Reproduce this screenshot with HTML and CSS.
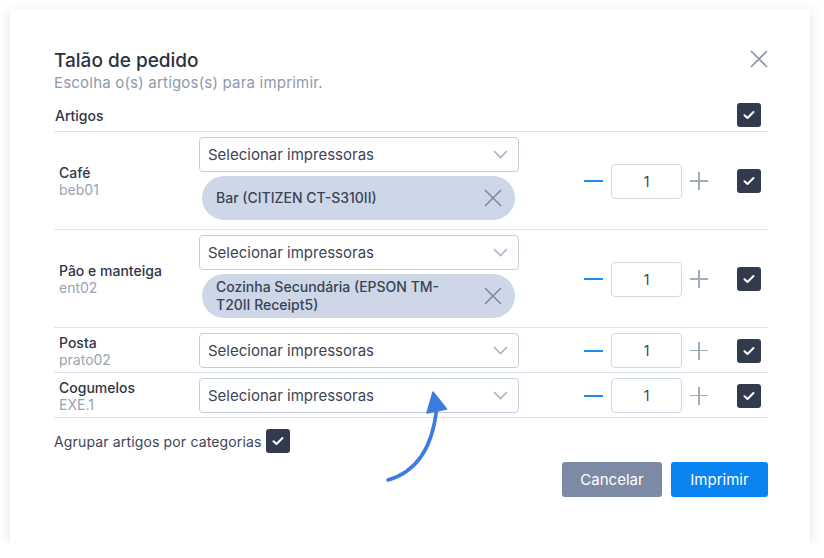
FILE: index.html
```html
<!DOCTYPE html>
<html lang="pt">
<head>
    <meta charset="UTF-8">
    <meta name="viewport" content="width=device-width, initial-scale=1.0">
    <title>Talão de pedido</title>
    <link rel="stylesheet" href="styles.css">
</head>
<body>
    <div class="dialog">
        <div class="dialog-header">
            <div>
                <h1 class="title">Talão de pedido</h1>
                <p class="subtitle">Escolha o(s) artigos(s) para imprimir.</p>
            </div>
            <button class="close" type="button" aria-label="Fechar">
                <svg width="18" height="18" viewBox="0 0 18 18"><path d="M1 1L17 17M17 1L1 17" stroke="#8794aa" stroke-width="1.6" fill="none"/></svg>
            </button>
        </div>

        <div class="list-head">
            <span class="list-label">Artigos</span>
            <span class="check"><svg width="12" height="10" viewBox="0 0 12 10"><path d="M1.5 5.2L4.5 8L10.5 2" stroke="#fff" stroke-width="2" fill="none" stroke-linecap="round" stroke-linejoin="round"/></svg></span>
        </div>

        <div class="item">
            <div class="item-name">
                <div class="name">Café</div>
                <div class="code">beb01</div>
            </div>
            <div class="printers">
                <div class="select">
                    <span>Selecionar impressoras</span>
                    <svg class="chevron" width="15" height="9" viewBox="0 0 15 9"><path d="M1 1L7.5 7.5L14 1" stroke="#a8b2c4" stroke-width="1.6" fill="none"/></svg>
                </div>
                <div class="chip">
                    <span class="chip-text">Bar (CITIZEN CT-S310II)</span>
                    <svg class="chip-x" width="18" height="18" viewBox="0 0 18 18"><path d="M1 1L17 17M17 1L1 17" stroke="#7b889e" stroke-width="1.6" fill="none"/></svg>
                </div>
            </div>
            <div class="stepper">
                <span class="minus"></span>
                <input class="qty" type="text" value="1">
                <span class="plus"></span>
            </div>
            <span class="check"><svg width="12" height="10" viewBox="0 0 12 10"><path d="M1.5 5.2L4.5 8L10.5 2" stroke="#fff" stroke-width="2" fill="none" stroke-linecap="round" stroke-linejoin="round"/></svg></span>
        </div>

        <div class="item">
            <div class="item-name">
                <div class="name">Pão e manteiga</div>
                <div class="code">ent02</div>
            </div>
            <div class="printers">
                <div class="select">
                    <span>Selecionar impressoras</span>
                    <svg class="chevron" width="15" height="9" viewBox="0 0 15 9"><path d="M1 1L7.5 7.5L14 1" stroke="#a8b2c4" stroke-width="1.6" fill="none"/></svg>
                </div>
                <div class="chip">
                    <span class="chip-text">Cozinha Secundária (EPSON TM-T20II Receipt5)</span>
                    <svg class="chip-x" width="18" height="18" viewBox="0 0 18 18"><path d="M1 1L17 17M17 1L1 17" stroke="#7b889e" stroke-width="1.6" fill="none"/></svg>
                </div>
            </div>
            <div class="stepper">
                <span class="minus"></span>
                <input class="qty" type="text" value="1">
                <span class="plus"></span>
            </div>
            <span class="check"><svg width="12" height="10" viewBox="0 0 12 10"><path d="M1.5 5.2L4.5 8L10.5 2" stroke="#fff" stroke-width="2" fill="none" stroke-linecap="round" stroke-linejoin="round"/></svg></span>
        </div>

        <div class="item">
            <div class="item-name">
                <div class="name">Posta</div>
                <div class="code">prato02</div>
            </div>
            <div class="printers">
                <div class="select">
                    <span>Selecionar impressoras</span>
                    <svg class="chevron" width="15" height="9" viewBox="0 0 15 9"><path d="M1 1L7.5 7.5L14 1" stroke="#a8b2c4" stroke-width="1.6" fill="none"/></svg>
                </div>
            </div>
            <div class="stepper">
                <span class="minus"></span>
                <input class="qty" type="text" value="1">
                <span class="plus"></span>
            </div>
            <span class="check"><svg width="12" height="10" viewBox="0 0 12 10"><path d="M1.5 5.2L4.5 8L10.5 2" stroke="#fff" stroke-width="2" fill="none" stroke-linecap="round" stroke-linejoin="round"/></svg></span>
        </div>

        <div class="item">
            <div class="item-name">
                <div class="name">Cogumelos</div>
                <div class="code">EXE.1</div>
            </div>
            <div class="printers">
                <div class="select">
                    <span>Selecionar impressoras</span>
                    <svg class="chevron" width="15" height="9" viewBox="0 0 15 9"><path d="M1 1L7.5 7.5L14 1" stroke="#a8b2c4" stroke-width="1.6" fill="none"/></svg>
                </div>
            </div>
            <div class="stepper">
                <span class="minus"></span>
                <input class="qty" type="text" value="1">
                <span class="plus"></span>
            </div>
            <span class="check"><svg width="12" height="10" viewBox="0 0 12 10"><path d="M1.5 5.2L4.5 8L10.5 2" stroke="#fff" stroke-width="2" fill="none" stroke-linecap="round" stroke-linejoin="round"/></svg></span>
        </div>

        <div class="group">
            <span>Agrupar artigos por categorias</span>
            <span class="check"><svg width="12" height="10" viewBox="0 0 12 10"><path d="M1.5 5.2L4.5 8L10.5 2" stroke="#fff" stroke-width="2" fill="none" stroke-linecap="round" stroke-linejoin="round"/></svg></span>
        </div>

        <div class="actions">
            <button class="btn btn-cancel" type="button">Cancelar</button>
            <button class="btn btn-print" type="button">Imprimir</button>
        </div>

        <!-- annotation arrow pointing at the printer select -->
        <svg class="arrow" width="80" height="100" viewBox="376 383 80 100">
            <path d="M388 480 Q430 468 436.5 410" stroke="#3c7ce0" stroke-width="3.6" fill="none" stroke-linecap="round"/>
            <path d="M433 392 L446.5 409 L427 413 Z" fill="#3c7ce0" stroke="#3c7ce0" stroke-width="1.5" stroke-linejoin="round"/>
        </svg>
    </div>
</body>
</html>
```

FILE: styles.css
```css
body {
    margin: 0;
    background-color: #fff;
    font-family: Inter, "Open Sans", sans-serif;
    color: #3d4455;
}

.dialog {
    position: relative;
    box-sizing: border-box;
    width: 800px;
    height: 534px;
    margin: 9px 0 0 10px;
    padding: 39px 42px 0 44px;
    background-color: #fff;
    box-shadow: 0 3px 12px rgba(40, 55, 90, 0.14);
}

.dialog-header {
    display: flex;
    justify-content: space-between;
    align-items: flex-start;
}

.title {
    margin: 0;
    font-size: 19px;
    font-weight: 500;
    line-height: 26px;
    color: #2c3140;
}

.subtitle {
    margin: 0;
    font-size: 15px;
    letter-spacing: 0.2px;
    line-height: 18px;
    color: #8f99ad;
}

.close {
    margin-top: 2px;
    padding: 0;
    border: none;
    background: none;
    line-height: 0;
    cursor: pointer;
}

.list-head {
    display: flex;
    justify-content: space-between;
    align-items: center;
    margin-top: 11px;
    padding: 0 7px 4px 1px;
    border-bottom: 1px solid #dde3ee;
}

.list-label {
    font-size: 14px;
    font-weight: 500;
    color: #2f3545;
}

.check {
    display: flex;
    align-items: center;
    justify-content: center;
    width: 24px;
    height: 24px;
    border-radius: 3px;
    background-color: #323b4e;
    flex-shrink: 0;
}

.item {
    display: flex;
    align-items: center;
    padding: 5px 7px 4px 5px;
    border-bottom: 1px solid #dde3ee;
}

.item-name {
    width: 140px;
    font-size: 14px;
    line-height: 17px;
}

.name {
    font-weight: 500;
    color: #2f3545;
}

.code {
    color: #9aa3b5;
}

.printers {
    width: 320px;
}

.select {
    display: flex;
    justify-content: space-between;
    align-items: center;
    box-sizing: border-box;
    height: 35px;
    padding: 0 10px 0 8px;
    border: 1px solid #c6cedd;
    border-radius: 4px;
    font-size: 15px;
    color: #3d4455;
}

.chip {
    display: flex;
    justify-content: space-between;
    align-items: center;
    box-sizing: border-box;
    min-height: 44px;
    margin: 4px 4px 5px 3px;
    padding: 0 13px 0 14px;
    border-radius: 22px;
    background-color: #cdd7e7;
}

.chip-text {
    max-width: 232px;
    font-size: 14px;
    font-weight: 500;
    line-height: 18px;
    color: #3a4254;
}

.stepper {
    display: flex;
    align-items: center;
    margin-left: auto;
}

.minus {
    width: 19px;
    height: 2px;
    background-color: #1a8cf2;
}

.qty {
    box-sizing: border-box;
    width: 71px;
    height: 35px;
    margin: 0 8px;
    border: 1px solid #cfd7e5;
    border-radius: 4px;
    text-align: center;
    font-family: inherit;
    font-size: 14px;
    color: #3d4455;
}

.plus {
    position: relative;
    width: 18px;
    height: 18px;
}

.plus::before,
.plus::after {
    content: "";
    position: absolute;
    background-color: #a1acbf;
}

.plus::before {
    left: 0;
    top: 8px;
    width: 18px;
    height: 1.6px;
}

.plus::after {
    left: 8.2px;
    top: 0;
    width: 1.6px;
    height: 18px;
}

.item .check {
    margin-left: 29px;
}

.group {
    display: flex;
    align-items: center;
    gap: 4px;
    margin-top: 11px;
    font-size: 14px;
    letter-spacing: 0.15px;
    color: #3d4455;
}

.actions {
    display: flex;
    justify-content: flex-end;
    gap: 9px;
    margin-top: 9px;
}

.btn {
    box-sizing: border-box;
    height: 35px;
    border: none;
    border-radius: 3px;
    font-family: inherit;
    font-size: 15px;
    color: #fff;
    cursor: pointer;
}

.btn-cancel {
    width: 100px;
    background-color: #7d8aa6;
}

.btn-print {
    width: 97px;
    background-color: #0a84f0;
}

.arrow {
    position: absolute;
    left: 366px;
    top: 374px;
}
```
